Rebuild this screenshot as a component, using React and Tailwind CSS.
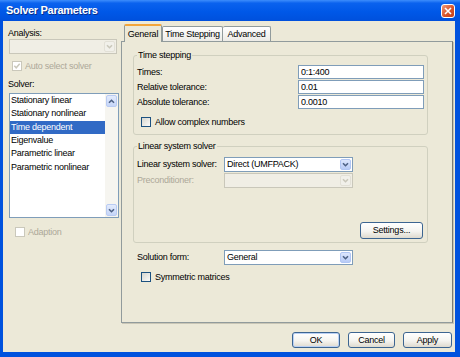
import React from "react";

const SOLVERS = [
  "Stationary linear",
  "Stationary nonlinear",
  "Time dependent",
  "Eigenvalue",
  "Parametric linear",
  "Parametric nonlinear",
];

function Chevron({ dir = "down", color = "#4D6185" }) {
  const d = dir === "down" ? "M1 1.2 L3.5 3.7 L6 1.2" : "M1 3.8 L3.5 1.3 L6 3.8";
  return (
    <svg width="7" height="5" viewBox="0 0 7 5" className="block">
      <path d={d} fill="none" stroke={color} strokeWidth="1.6" />
    </svg>
  );
}

function Checkbox({ label, checked, disabled, className = "" }) {
  return (
    <div className={`flex items-center gap-[3px] h-[10px] ${className}`}>
      <span
        className={
          disabled
            ? "w-[10px] h-[10px] flex items-center justify-center border border-[#CAC8BB] bg-white"
            : "w-[10px] h-[10px] flex items-center justify-center border border-[#1C5180] bg-[linear-gradient(135deg,#D6D6CF,#FBFBF9)]"
        }
      >
        {checked && (
          <svg width="8" height="8" viewBox="0 0 8 8">
            <path d="M1.3 3.8 L3.2 5.8 L6.7 1.8" fill="none" stroke={disabled ? "#CAC8BB" : "#21A121"} strokeWidth="1.5" />
          </svg>
        )}
      </span>
      <span className={disabled ? "text-[#ACA899]" : ""}>{label}</span>
    </div>
  );
}

function Combo({ value = "", disabled, className = "" }) {
  return (
    <div
      className={`h-[15px] flex items-center border ${
        disabled ? "border-[#C9C7BA] bg-[#F0EEE5]" : "border-[#7F9DB9] bg-white"
      } ${className}`}
    >
      <span className="flex-1 pl-[2px] truncate leading-[13px]">{value}</span>
      <span
        className={
          disabled
            ? "w-[11px] h-[11px] mr-[1px] rounded-[2px] flex items-center justify-center border border-[#E2E0D6] bg-[#F1F0EA]"
            : "w-[11px] h-[11px] mr-[1px] rounded-[2px] flex items-center justify-center border border-[#B1C6F4] bg-[linear-gradient(180deg,#DCE6FD,#B8CBF6)]"
        }
      >
        <Chevron color={disabled ? "#C9C7BA" : "#4D6185"} />
      </span>
    </div>
  );
}

function TextBox({ value }) {
  return (
    <div className="flex-1 h-[14px] border border-[#7F9DB9] bg-white pl-[2px] leading-[12px]">
      {value}
    </div>
  );
}

function Btn({ children, className = "" }) {
  return (
    <button
      className={`h-[16px] rounded-[3px] border border-[#3C6591] bg-[linear-gradient(180deg,#FFFFFF_0%,#F5F4F0_55%,#DEDACF_100%)] flex items-center justify-center ${className}`}
    >
      {children}
    </button>
  );
}

function ScrollArrow({ dir }) {
  return (
    <div className="h-[12px] mx-[1px] rounded-[2px] border border-[#B9CBF3] bg-[linear-gradient(180deg,#E3EBFC,#C5D5F8)] flex items-center justify-center">
      <Chevron dir={dir} />
    </div>
  );
}

export default function App() {
  return (
    <div className="w-[460px] h-[357px] flex flex-col bg-[#0052DE] font-['Liberation_Sans',Arial,sans-serif] text-[9px] leading-[11px] tracking-[-0.25px] text-black select-none">
      {/* title bar */}
      <div className="h-[21px] flex items-center justify-between pl-[6px] pr-[5px] bg-[linear-gradient(180deg,#3D8DFC_0%,#0A62EE_15%,#0058E8_55%,#0050DC_100%)]">
        <span className="text-white font-bold text-[11px] tracking-[-0.3px] [text-shadow:1px_1px_0_#0A2F8A]">
          Solver Parameters
        </span>
        <div className="w-[14px] h-[14px] rounded-[3px] border border-white bg-[linear-gradient(135deg,#F09A7A,#D9532A_55%,#C4401A)] flex items-center justify-center">
          <svg width="8" height="8" viewBox="0 0 8 8">
            <path d="M1 1 L7 7 M7 1 L1 7" stroke="white" strokeWidth="1.6" />
          </svg>
        </div>
      </div>

      {/* body */}
      <div className="flex-1 ml-[3px] mr-[5px] mb-[5px] bg-[#ECE9D8] flex flex-col pl-[5px] pr-[2px] pt-[3px] pb-[4px]">
        <div className="flex gap-[2px]">
          {/* left column */}
          <div className="w-[111px] pt-[4px] flex flex-col">
            <span>Analysis:</span>
            <Combo disabled className="ml-[1px] w-[108px] h-[14px]" />
            <Checkbox checked disabled label="Auto select solver" className="mt-[7px] ml-[4px]" />
            <span className="mt-[8px]">Solver:</span>
            <div className="mt-[3px] ml-[1px] h-[125px] border border-[#7F9DB9] bg-white flex">
              <div className="flex-1 flex flex-col">
                {SOLVERS.map((s, i) => (
                  <div
                    key={s}
                    className={
                      i === 2
                        ? "h-[13.33px] leading-[13.33px] pl-[1px] bg-[#316AC5] text-white"
                        : "h-[13.33px] leading-[13.33px] pl-[1px]"
                    }
                  >
                    {s}
                  </div>
                ))}
              </div>
              <div className="w-[13px] flex flex-col justify-between py-[1px] bg-[#F6F5F0]">
                <ScrollArrow dir="up" />
                <ScrollArrow dir="down" />
              </div>
            </div>
            <Checkbox disabled label="Adaption" className="mt-[9px] ml-[7px]" />
          </div>

          {/* tab control */}
          <div className="w-[332px] flex flex-col">
            <div className="h-[17px] flex items-end pl-[3px]">
              <div className="relative z-10 -mb-px h-[18px] w-[38px] flex items-center justify-center rounded-t-[2px] border-x border-[#919B9C] border-t-2 border-t-[#F2A53A] bg-[#ECE9D8]">
                General
              </div>
              <div className="h-[15px] w-[61px] flex items-center justify-center rounded-t-[2px] border-x border-t border-[#919B9C] bg-[linear-gradient(180deg,#FFFFFF,#ECEBE6)]">
                Time Stepping
              </div>
              <div className="h-[15px] w-[48px] flex items-center justify-center rounded-t-[2px] border-r border-t border-[#919B9C] bg-[linear-gradient(180deg,#FFFFFF,#ECEBE6)]">
                Advanced
              </div>
            </div>

            <div className="h-[282px] border border-[#919B9C] border-r-[#7C7C72] bg-[#ECE9D8] shadow-[1px_1px_0_#C9C6B6] pl-[11px] flex flex-col">
              <fieldset className="mt-[8px] w-[295px] border border-[#D0D0BF] rounded-[3px] pl-[3px] pr-[3px] pt-[4px] pb-[7px]">
                <legend className="px-[1px]">Time stepping</legend>
                {[
                  ["Times:", "0:1:400"],
                  ["Relative tolerance:", "0.01"],
                  ["Absolute tolerance:", "0.0010"],
                ].map(([l, v]) => (
                  <div key={l} className="h-[15px] flex items-start">
                    <span className="w-[161px] leading-[14px]">{l}</span>
                    <TextBox value={v} />
                  </div>
                ))}
                <Checkbox label="Allow complex numbers" className="mt-[7px] ml-[4px] gap-[4px]" />
              </fieldset>

              <fieldset className="mt-[6px] w-[295px] border border-[#D0D0BF] rounded-[3px] pl-[3px] pr-[3px] pt-[5px] pb-[3px]">
                <legend className="px-[1px]">Linear system solver</legend>
                <div className="h-[15px] flex items-center">
                  <span className="w-[87px]">Linear system solver:</span>
                  <Combo value="Direct (UMFPACK)" className="w-[129px]" />
                </div>
                <div className="mt-[1px] h-[15px] flex items-center">
                  <span className="w-[87px] text-[#ACA899]">Preconditioner:</span>
                  <Combo disabled className="w-[129px]" />
                </div>
                <div className="mt-[34px] flex justify-end">
                  <Btn className="w-[63px] h-[17px] mr-[1px]">Settings...</Btn>
                </div>
              </fieldset>

              <div className="mt-[7px] pl-[4px] h-[15px] flex items-center">
                <span className="w-[87px]">Solution form:</span>
                <Combo value="General" className="w-[129px]" />
              </div>
              <Checkbox label="Symmetric matrices" className="mt-[7px] ml-[8px] gap-[4px]" />
            </div>
          </div>
        </div>

        <div className="mt-[9px] flex justify-end gap-[8px] mr-[1px]">
          <Btn className="w-[48px] shadow-[inset_0_0_0_1px_#B9D0F4]">OK</Btn>
          <Btn className="w-[47px]">Cancel</Btn>
          <Btn className="w-[49px]">Apply</Btn>
        </div>
      </div>
    </div>
  );
}
